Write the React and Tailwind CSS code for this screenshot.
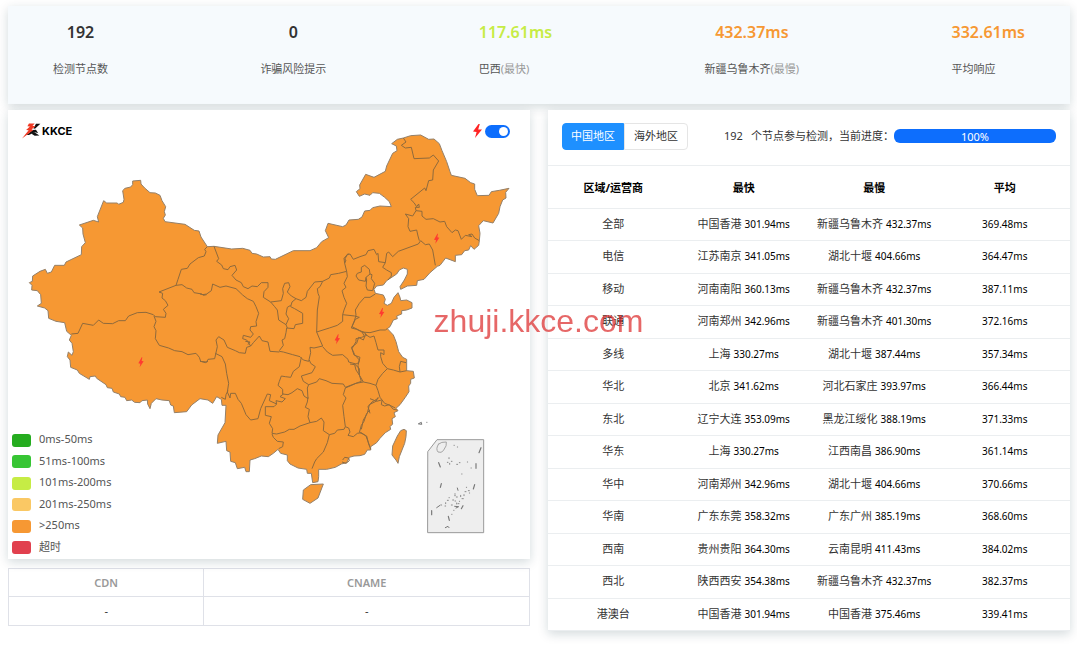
import { useState } from "react";
import clsx from "clsx";

const stats = [
  { value: "192", label: "检测节点数", color: "text-[#333333]" },
  { value: "0", label: "诈骗风险提示", color: "text-[#333333]" },
  { value: "117.61ms", label: "巴西", note: "(最快)", color: "text-[#c6ec45]" },
  { value: "432.37ms", label: "新疆乌鲁木齐", note: "(最慢)", color: "text-[#f69833]" },
  { value: "332.61ms", label: "平均响应", color: "text-[#f69833]" },
];

const legend = [
  { label: "0ms-50ms", color: "bg-[#25ac1f]" },
  { label: "51ms-100ms", color: "bg-[#37c534]" },
  { label: "101ms-200ms", color: "bg-[#c6ec45]" },
  { label: "201ms-250ms", color: "bg-[#fac864]" },
  { label: ">250ms", color: "bg-[#f69833]" },
  { label: "超时", color: "bg-[#e1404e]" },
];

const rows = [
  ["全部", "中国香港", "301.94ms", "新疆乌鲁木齐", "432.37ms", "369.48ms"],
  ["电信", "江苏南京", "341.05ms", "湖北十堰", "404.66ms", "364.47ms"],
  ["移动", "河南南阳", "360.13ms", "新疆乌鲁木齐", "432.37ms", "387.11ms"],
  ["联通", "河南郑州", "342.96ms", "新疆乌鲁木齐", "401.30ms", "372.16ms"],
  ["多线", "上海", "330.27ms", "湖北十堰", "387.44ms", "357.34ms"],
  ["华北", "北京", "341.62ms", "河北石家庄", "393.97ms", "366.44ms"],
  ["东北", "辽宁大连", "353.09ms", "黑龙江绥化", "388.19ms", "371.33ms"],
  ["华东", "上海", "330.27ms", "江西南昌", "386.90ms", "361.14ms"],
  ["华中", "河南郑州", "342.96ms", "湖北十堰", "404.66ms", "370.66ms"],
  ["华南", "广东东莞", "358.32ms", "广东广州", "385.19ms", "368.60ms"],
  ["西南", "贵州贵阳", "364.30ms", "云南昆明", "411.43ms", "384.02ms"],
  ["西北", "陕西西安", "354.38ms", "新疆乌鲁木齐", "432.37ms", "382.37ms"],
  ["港澳台", "中国香港", "301.94ms", "中国香港", "375.46ms", "339.41ms"],
];

// mainland outline, clockwise from the north-west
const OUTLINE =
  "M140,466 169,466 174,456 220,434 221,410 232,398 225,372 224,354 214,345 256,331 272,336 268,320 287,272 296,279 328,279 332,283 346,277 348,268 344,242 351,235 368,231 374,224 374,213 398,211 399,222 410,234 426,248 442,249 456,256 462,272 473,290 469,305 472,315 466,325 471,335 531,343 559,361 573,363 579,381 598,410 " +
  "618,409 671,417 704,415 726,421 732,430 746,432 766,441 786,440 790,447 802,448 856,422 906,422 926,413 941,395 962,383 952,362 960,340 1004,350 1014,345 1023,330 1051,328 1062,321 1070,303 " +
  "1086,301 1094,293 1116,288 1150,290 1144,275 1130,262 1114,250 1094,248 1086,256 1070,252 1054,259 1045,245 1056,236 1055,225 1073,193 1098,202 1132,184 1136,168 1154,130 1167,122 1165,108 1151,101 1168,88 1186,84 1208,77 1238,75 1262,88 1278,87 1294,101 1302,122 1316,155 1326,185 1330,196 1371,205 1388,218 1400,222 1400,238 1408,257 1443,256 1450,245 1474,241 1503,235 1493,247 1494,264 1484,270 1476,290 1472,310 1455,339 1426,332 1412,347 1416,370 1414,392 1412,406 1398,418 1388,407 1382,420 1370,422 1361,434 1342,436 1342,455 1313,444 1296,466 1288,469 " +
  "1266,488 1248,508 1228,512 1226,526 1198,528 1178,538 1176,530 1189,510 1198,492 1198,478 1186,474 1174,480 1166,492 1136,512 1126,525 1106,528 1098,538 1102,550 1126,555 1132,568 1128,580 1138,586 1150,580 1158,562 1170,548 1176,562 1178,572 1196,570 1212,578 1212,594 1196,600 1181,602 1181,612 1166,618 1168,626 1156,630 1146,650 1138,656 1156,675 1164,695 1172,725 1184,742 1196,748 1196,782 1216,784 1219,804 1208,808 1208,820 1202,828 1203,845 1192,862 1176,884 " +
  "1164,895 1170,902 1158,908 1162,920 1152,926 1154,942 1146,950 1148,958 1132,968 1116,985 1106,998 1088,1010 1088,1020 1078,1020 1070,1033 1056,1037 1038,1038 1024,1042 1016,1058 1000,1062 982,1072 956,1078 932,1078 932,1100 930,1115 914,1118 910,1090 898,1090 896,1078 870,1074 846,1062 838,1052 838,1035 818,1030 810,1018 796,1030 781,1040 760,1038 740,1046 726,1050 724,1085 714,1085 710,1072 688,1076 682,1058 668,1054 666,1026 656,1022 654,994 628,1000 630,975 651,938 654,886 642,886 640,868 626,860 614,880 600,870 576,866 " +
  "551,885 536,905 499,908 496,888 488,885 484,872 462,870 444,866 430,880 426,896 419,882 418,870 402,872 396,878 380,877 371,870 356,872 351,862 338,860 334,852 316,846 312,835 298,833 294,824 266,805 262,798 246,800 244,808 214,790 208,780 188,772 186,750 178,740 181,726 192,736 196,725 192,700 184,690 190,676 176,664 170,638 144,634 122,625 120,602 110,594 88,588 100,580 98,554 88,542 71,540 72,526 64,518 73,514 74,498 96,484 112,478 118,490 130,486Z";

// province borders, grouped by the part of the country they run through
const BORDERS = [
  {
    shift: "translate(6 450)",
    lines: [
      "M184,222 204,220 218,190 250,196 266,180 280,190 308,191 326,182 346,182 356,168 382,158 408,157 430,164 436,170 466,172 468,160 460,148 474,136 466,122 456,114 458,100 447,96 498,76 504,58 514,28 532,25 540,12 565,-7 583,-12 588,-25 584,-32 592,-40",
      "M432,168 438,184 432,200 438,212 436,236 448,256 476,264 494,272 516,275 534,284 558,280 568,292 572,304 586,308 594,304",
      "M498,76 516,74 530,84 546,88 552,98 576,102 580,106 590,104",
    ],
  },
  {
    shift: "translate(576 450)",
    lines: [
      "M0,102 8,104 20,102 34,92 38,72 60,82 78,78 108,86 128,105 142,116 160,124 168,140 176,160 168,185 170,198 152,200 150,210 160,222 152,232 130,226 128,236 140,240 152,258 140,262 136,280 118,278 106,272 82,262 72,240 56,230 48,240 52,260 44,296 24,298 20,306 0,304",
      "M42,-41 56,-4 50,4 65,15 70,26 84,29 90,20 105,16 110,30 96,46 108,60 124,68 130,80 144,86 156,78 172,80 184,68 204,68 204,82 192,95 190,112 212,126 224,140 232,150 236,180 258,194 266,176 258,162 262,142 272,136",
      "M212,126 244,122 250,100 248,86 254,70 266,68 270,80 262,96 274,108 288,116 276,126 272,140 284,146 308,160 308,190 286,194 282,206 260,204 258,218 254,236 246,240 250,256 238,272",
      "M258,194 262,204M136,244 150,246 144,254",
      "M288,116 304,122 318,112 322,94 344,66 368,64 360,80 352,86 354,100 358,110 352,150 350,216 360,240 368,258 342,264 330,262 332,278 326,304 310,300 300,290 278,284 250,276 238,274",
      "M368,64 388,54 392,44 416,40 440,34 442,50 432,70 438,82 426,92 432,112 440,130 432,150 428,164 428,184 412,196 388,204 350,216",
      "M152,258 160,248 178,228 186,242 204,246 210,274 238,276",
      "M428,164 464,168 478,172 466,178 456,200 480,212 494,218 500,226 485,232 468,236 468,245 456,266 462,285 480,292 476,308 468,312 446,306 444,298 428,284 398,286 382,276 368,260",
      "M462,310 478,326 478,345 484,364 462,372 436,382 430,372 396,370 378,362 358,356 350,366 326,374 310,364 304,348 336,338 346,320 332,310 328,300",
      "M304,292 298,320 280,334 272,352 256,350 244,348 238,364 234,376 248,388 248,402 264,404 276,398 292,386 306,392 312,408 324,416 322,384 326,374",
      "M46,280 66,290 76,312 80,340 86,370 82,396 90,414 92,400 106,400 114,418 124,430 138,464 152,480 174,476 182,446 202,402 212,404 208,422 230,432 228,422 246,426 256,416 240,410 250,402",
      "M64,412 76,418 78,404 84,392",
      "M230,432 222,440 196,440 196,466 214,470 208,490 218,506 216,520 230,522 254,516 268,508 282,508 300,498 330,488 324,470 328,448 316,442 322,426 324,412",
      "M216,522 220,532 232,544 250,546 248,560 236,566",
      "M330,488 350,484 364,474 372,486 370,512 388,524 382,548 370,576 350,596 344,606 336,626",
      "M436,384 430,404 438,414 428,436 432,470 436,500 432,508 412,510 404,520 388,524",
      "M436,500 446,504 450,516 444,526 460,530 472,520 484,518 498,528 506,550 510,560",
      "M478,518 484,496 492,484 500,460 510,450",
      "M428,600 434,592 446,594 448,602 438,610 426,606",
    ],
  },
  {
    shift: "translate(1026 0)",
    lines: [
      "M160,84 168,96 154,106 166,114 184,112 192,146 238,144 250,135 266,153 250,180 248,210 236,212 228,242 224,234 182,268 192,278 200,290 206,282 208,292 196,292 198,302 216,304 216,318 228,328 250,326 270,336 284,334 290,350 306,368 316,360 324,362 334,388 346,376 366,380 356,374 366,372 374,384 388,392",
      "M198,302 188,318 166,312 176,326 174,350 180,364 200,360 204,378 208,392",
      "M-10,484 -16,460 -12,450 -16,448 -8,434 0,432 10,448 30,440 48,434 54,422 72,418 80,434 84,430 86,455 106,458 110,430 116,426 128,440 145,424 205,402 212,392 226,404 238,402 248,420 256,466",
      "M106,458 98,472 110,480 124,488 124,498 114,510",
      "M-16,460 -18,445 -5,430",
    ],
  },
  {
    shift: "translate(1026 450)",
    lines: [
      "M18,48 22,40 34,36 34,22 44,16 58,28 60,42 48,52 46,64 26,60Z",
      "M60,42 66,44 64,56 74,70 68,92 52,90 48,78 50,60 48,52",
      "M76,102 60,112 44,112 28,130 16,150 18,165 14,180 4,204 20,208 36,216 60,218 90,210 106,210 112,206",
      "M36,216 44,230 40,240 26,232 20,250 4,262 14,284 28,300 24,316 28,345 40,366 60,370 78,376 84,358 98,340 112,326 130,330 150,336 148,320 152,304 168,308",
      "M44,222 60,232 72,228 78,248 84,270 102,270 102,284 92,278 92,290 98,310 112,326",
      "M78,376 84,392 90,412 104,430 120,436 136,444",
      "M-14,384 0,378 18,370 40,366M0,312 14,314 18,330 28,345",
      "M150,336 170,332M86,414 66,426 54,440 60,460",
    ],
  },
  {
    shift: "translate(1056 870)",
    lines: [
      "M66,0 64,14 74,18 88,14 100,28 112,30",
      "M54,-8 48,4 28,14 22,40 10,60 4,88",
      "M0,98 20,108 26,132 32,148",
      "M64,0 50,4 30,-4",
    ],
  },
];

const BOLTS = [
  [1286, 386],
  [1121, 609],
  [988, 688],
  [399, 757],
];

function ChinaMap() {
  return (
    <svg viewBox="0 0 1566 1347" className="block w-full" role="img" aria-label="中国地图">
      <g fill="#f69833" stroke="#948069" strokeWidth="3" strokeLinejoin="round">
        <path d={OUTLINE} />
        <path d="M886,1140 908,1124 946,1122 930,1164 906,1180 884,1168Z" />
        <path d="M1188,958 1195,962 1194,980 1190,1000 1174,1040 1170,1060 1164,1050 1152,1035 1154,1008 1168,978 1178,962Z" />
      </g>
      <g fill="none" stroke="#8f6a3c" strokeWidth="3" strokeLinejoin="round">
        {BORDERS.map((part) => (
          <g key={part.shift} transform={part.shift}>
            {part.lines.map((d) => (
              <path key={d} d={d} />
            ))}
          </g>
        ))}
      </g>

      {/* lightning marks */}
      {BOLTS.map(([x, y]) => (
        <path
          key={x}
          transform={`translate(${x} ${y})`}
          d="M2,-15 -8,3 -2,4 -4,15 8,-3 2,-4 4,-15Z"
          fill="#ff3b30"
        />
      ))}

      {/* south sea inset */}
      <g transform="translate(1056 870)" strokeLinecap="round">
        <path d="M204,154 231,119 371,119 371,398 204,398Z" fill="#eeeeee" stroke="#999999" strokeWidth="3" />
        <path
          d="M236,132Q244,125 259,126Q262,136 250,152Q244,160 234,156Q226,146 236,132Z"
          fill="#eeeeee"
          stroke="#a5a5a5"
          strokeWidth="3"
        />
        <path
          d="M236,188 241,201M348,191 348,205M363,143 357,158M244,251 241,262M344,254 340,267M215,332 215,344M309,317 304,326M265,349 268,361"
          stroke="#777777"
          strokeWidth="3.5"
        />
        <path
          d="M176,71 184,67 185,72ZM256,383 264,379 267,383M230,323 240,316M292,264 294,271M284,319 296,320 288,324"
          fill="none"
          stroke="#777777"
          strokeWidth="3"
        />
        <path
          d="M200,67h1M282,136h1M292,141h1M267,173v3M274,184h2M262,187h2M269,190v3M290,193h3M298,188h2M322,186h1M333,204h1M305,222h1M319,262h1M315,275h3M325,272h3M302,286v4M312,284v3M284,282h2M289,291h3M306,296h4M267,293h1M262,301h3M278,300h3M285,303h2M298,304h1M290,309v3M294,311h3M274,315h3M257,308v3M255,318h2M243,315h2M281,331h1M275,343h1M328,279h1M284,287h2"
          stroke="#8a8a8a"
          strokeWidth="3"
        />
      </g>
    </svg>
  );
}

function Logo() {
  return (
    <div className="flex items-center gap-px">
      <svg viewBox="36 38 60 50" className="h-4 w-[19px]" aria-hidden="true">
        <path d="M80,40 94,40 78,55 72,56ZM70,60 80,59 87,69 76,67 58,76 50,76Z" fill="#111111" />
        <path d="M74,66 91,77 76,78 66,72Z" fill="#111111" />
        <path d="M58,39 76,39 69,47 79,47 66,58 72,60 36,87 57,61 49,60 61,49 53,48Z" fill="#f03a25" />
      </svg>
      <span className="font-[Inter] text-[11px] font-bold leading-4 text-black">KKCE</span>
    </div>
  );
}

export default function App() {
  const [region, setRegion] = useState("cn");
  const [flash, setFlash] = useState(true);
  const progress = 100;

  return (
    <div className="bg-white pb-4 pl-2 pr-[7px] pt-1.5 font-['Noto_Sans','Noto_Sans_CJK_SC',sans-serif] text-[11px] leading-4 text-[#333333]">
      <section className="flex h-[98px] justify-between bg-[#f6fafd] px-[45px] pt-3.5 shadow-[0_3px_10px_rgba(10,50,60,0.18)]">
        {stats.map((item) => (
          <div key={item.label}>
            <p className={clsx("text-center text-[16px] font-semibold leading-6", item.color)}>{item.value}</p>
            <p className="mt-[17px] text-[#555555]">
              {item.label}
              {item.note && <span className="text-[#999999]">{item.note}</span>}
            </p>
          </div>
        ))}
      </section>

      <main className="mt-1.5 grid grid-cols-2 items-start gap-[18px]">
        <div>
          <section className="relative bg-white shadow-[0_3px_10px_rgba(10,50,60,0.18)]">
            <ChinaMap />
            <div className="absolute inset-x-0 top-0 flex items-center justify-between pl-3.5 pr-5 pt-[13px]">
              <Logo />
              <label className="flex items-center gap-[3px]">
                <svg viewBox="0 0 9 14" className="h-3.5 w-[9px]" aria-hidden="true">
                  <path d="M5.5,0 0,7.6 3.6,8 2,14 9,5.6 5.2,5.4 6.8,0Z" fill="#ff2424" />
                </svg>
                <input
                  type="checkbox"
                  role="switch"
                  aria-label="闪电"
                  checked={flash}
                  onChange={(e) => setFlash(e.target.checked)}
                  className="relative h-[13px] w-[25px] appearance-none rounded-full bg-gray-300 before:absolute before:left-0.5 before:top-0.5 before:size-[9px] before:rounded-full before:bg-white checked:bg-[#0d6efd] checked:before:left-3.5"
                />
              </label>
            </div>
            <ul className="absolute bottom-1 left-1 flex h-[124px] flex-col justify-between">
              {legend.map((item) => (
                <li key={item.label} className="flex items-center gap-2">
                  <span className={clsx("mt-0.5 h-[13px] w-[19px] rounded-[3px]", item.color)} />
                  <span className="text-[#555555]">{item.label}</span>
                </li>
              ))}
            </ul>
          </section>

          <table className="mt-[9px] w-full table-fixed border-collapse text-center">
            <thead>
              <tr className="h-7 text-[#999999]">
                <th className="w-3/8 border border-[#dfe1e8] font-semibold">CDN</th>
                <th className="border border-[#dfe1e8] font-semibold">CNAME</th>
              </tr>
            </thead>
            <tbody>
              <tr className="h-[29px]">
                <td className="border border-[#dfe1e8]">-</td>
                <td className="border border-[#dfe1e8]">-</td>
              </tr>
            </tbody>
          </table>
        </div>

        <section className="bg-white shadow-[0_3px_10px_rgba(10,50,60,0.18)]">
          <div className="flex h-[55px] items-center px-3.5 pb-[3px]">
            <div className="flex shrink-0">
              <button
                type="button"
                onClick={() => setRegion("cn")}
                className={clsx(
                  "h-[27px] w-[62px] rounded-l border",
                  region === "cn" ? "border-[#1e90ff] bg-[#1e90ff] text-white" : "border-[#e5e5e5]"
                )}
              >
                中国地区
              </button>
              <button
                type="button"
                onClick={() => setRegion("global")}
                className={clsx(
                  "h-[27px] w-16 rounded-r border",
                  region === "global" ? "border-[#1e90ff] bg-[#1e90ff] text-white" : "border-[#e5e5e5]"
                )}
              >
                海外地区
              </button>
            </div>
            <p className="ml-9 flex shrink-0 gap-2 whitespace-nowrap">
              <span>192</span>
              <span>个节点参与检测，当前进度：</span>
            </p>
            <div
              role="progressbar"
              aria-label="检测进度"
              aria-valuenow={progress}
              className="ml-auto h-3.5 w-[162px] overflow-hidden rounded-md bg-[#e9ecef]"
            >
              <div
                className="h-full bg-[#0d6efd] text-center text-[11px] leading-[15px] text-white"
                style={{ width: `${progress}%` }}
              >
                {progress}%
              </div>
            </div>
          </div>

          <table className="w-full table-fixed border-separate border-spacing-0 border-t border-[#ebeef0] text-center">
            <thead>
              <tr className="h-[43px] text-black">
                {["区域/运营商", "最快", "最慢", "平均"].map((head) => (
                  <th key={head} className="border-b border-[#ebeef0] pt-0.5 text-[11px] font-bold">
                    {head}
                  </th>
                ))}
              </tr>
            </thead>
            <tbody>
              {rows.map(([name, fastPlace, fast, slowPlace, slow, avg]) => (
                <tr key={name} className="odd:h-8 even:h-[33px] last:h-[33px]">
                  <td className="border-b border-[#ebeef0] pb-0.5">{name}</td>
                  <td className="border-b border-[#ebeef0] pb-0.5">
                    {fastPlace} <span className="text-[10px] text-black">{fast}</span>
                  </td>
                  <td className="border-b border-[#ebeef0] pb-0.5">
                    {slowPlace} <span className="text-[10px] text-black">{slow}</span>
                  </td>
                  <td className="border-b border-[#ebeef0] pb-0.5 text-[10px] text-black">{avg}</td>
                </tr>
              ))}
            </tbody>
          </table>
        </section>
      </main>

      {/* watermark */}
      <div className="pointer-events-none fixed inset-0 flex items-center justify-center pb-1.5">
        <span className="font-['Liberation_Sans',sans-serif] text-[32px] leading-10 text-[#dc2626]/70">
          zhuji.kkce.com
        </span>
      </div>
    </div>
  );
}
